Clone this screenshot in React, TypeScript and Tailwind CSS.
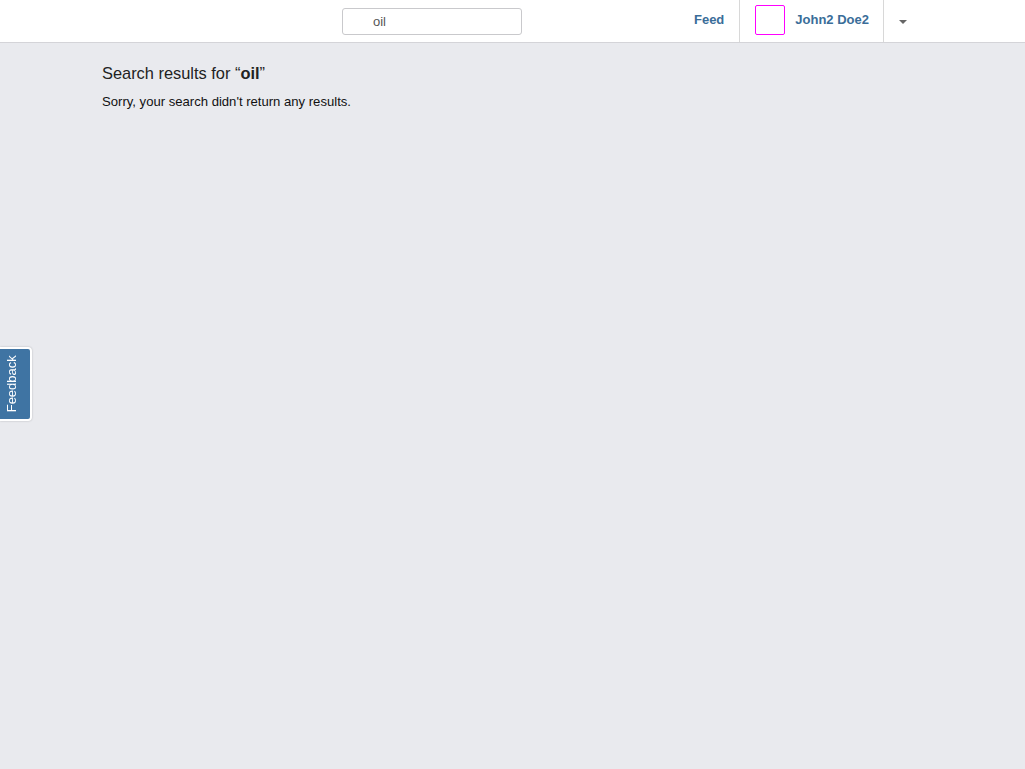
export default function App() {
  return (
    <div className="min-h-[769px] bg-[#e9eaee] font-['Liberation_Sans',Arial,sans-serif] text-[#222]">
      <header className="h-[43px] bg-white border-b border-[#d4d4d8] flex">
        <div className="w-[342px]" />
        <div className="pt-2">
          <input
            defaultValue="oil"
            className="w-[180px] h-[27px] rounded-[3px] border border-[#c9c9cc] pl-[30px] text-[13px] text-[#555] outline-none"
          />
        </div>
        <div className="flex-1" />
        <nav className="flex h-full mr-[118px]">
          <a className="flex items-center pr-[15px] pb-[2px] text-[13px] font-bold text-[#3a6d99]">Feed</a>
          <div className="w-px bg-[#d8d8d8]" />
          <a className="flex items-center pl-[15px] pr-[14px] pb-[2px] text-[13px] font-bold text-[#3a6d99]">
            <span className="w-[30px] h-[30px] rounded-[2px] border border-[#ff00ff] mr-[10px]" />
            John2 Doe2
          </a>
          <div className="w-px bg-[#d8d8d8]" />
          <div className="flex items-center pl-[15px] pt-[2px]">
            <span className="w-0 h-0 border-l-4 border-r-4 border-t-4 border-l-transparent border-r-transparent border-t-[#666]" />
          </div>
        </nav>
      </header>

      <main className="pl-[102px] pt-[20px]">
        <h1 className="text-[16.4px] leading-[20px] text-[#222]">
          Search results for “<span className="font-bold">oil</span>”
        </h1>
        <p className="mt-[11px] text-[13.1px] leading-[16px] text-[#111]">
          Sorry, your search didn't return any results.
        </p>
      </main>

      <div className="fixed left-0 top-[347px] w-[32px] h-[74px] bg-[#3f74a3] border-2 border-l-0 border-white rounded-r-[4px] shadow-[0_0_2px_rgba(0,0,0,0.25)] flex items-center justify-center pr-[6px]">
        <span className="-rotate-90 text-white text-[13px] whitespace-nowrap">Feedback</span>
      </div>
    </div>
  );
}
